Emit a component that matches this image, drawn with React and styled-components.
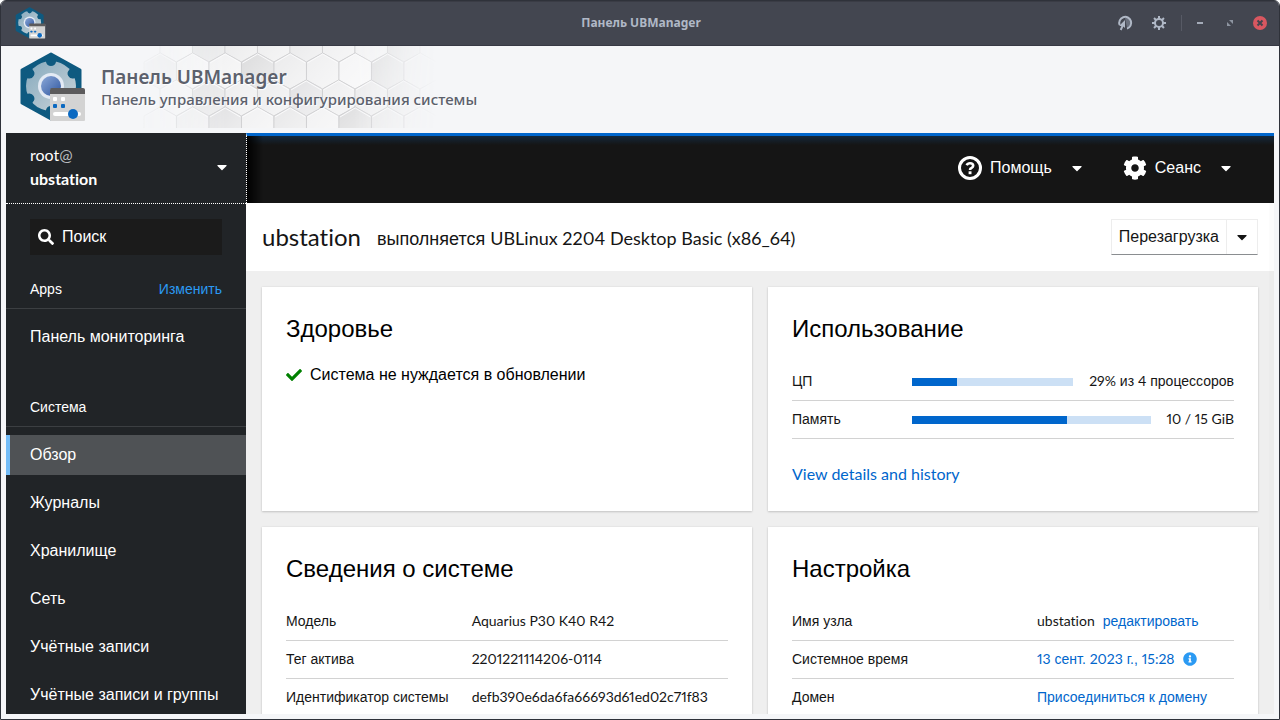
import styled, { createGlobalStyle } from "styled-components";
import {
  FaCaretDown,
  FaCheck,
  FaCog,
  FaInfoCircle,
  FaSearch,
} from "react-icons/fa";

const apps = ["Панель мониторинга"];

const systemPages = [
  "Обзор",
  "Журналы",
  "Хранилище",
  "Сеть",
  "Учётные записи",
  "Учётные записи и группы",
];

// fill of every hexagon in the header, one array per row
const hexRows = [
  { x: 160, y: 44, fills: ["#f2f2f3", "#dedfe0", "#e9e9ea", "#ececed", "#e8e8e9", "#eeeeef", "#f0f0f1", "#dededf", "#f0f0f1"] },
  { x: 144, y: 71, fills: ["#e2e3e4", "#f3f3f4", "#f1f1f2", "#dcdcdd", "#ebebec", "#efeff0", "#f5f5f6", "#dfdfe0", "#eeeeef"] },
  { x: 160, y: 98, fills: ["#f1f1f2", "#e0e0e1", "#ededee", "#ececed", "#e2e2e4", "#eeeeef", "#eaeaeb", "#e6e6e7", "#f2f2f3"] },
  { x: 144, y: 125, fills: ["#f3f3f4", "#ececed", "#e0e0e2", "#f1f1f2", "#e8e8e9", "#f2f2f3", "#dededf", "#e9e9ea", "#efeff0"] },
];

function Logo({ size }) {
  const notches = [0, 60, 120, 180, 240, 300];
  return (
    <svg width={size} height={size} viewBox="0 0 70 70" aria-hidden="true">
      <defs>
        <linearGradient id="gearFill" x1="0" y1="0" x2="1" y2="1">
          <stop offset="0" stopColor="#84a9bd" />
          <stop offset="1" stopColor="#cdd5da" />
        </linearGradient>
        <linearGradient id="coreFill" x1="0" y1="0" x2="1" y2="1">
          <stop offset="0" stopColor="#8ba8d8" />
          <stop offset="1" stopColor="#2f569f" />
        </linearGradient>
      </defs>
      <path
        d="M32 2 L61 18 V51 L32 67 L3 51 V18 Z"
        fill="#0e5a80"
        stroke="#0e5a80"
        strokeWidth="3"
        strokeLinejoin="round"
      />
      <circle cx="32" cy="34" r="25" fill="url(#gearFill)" />
      {notches.map((angle) => (
        <path
          key={angle}
          d="M25 6 L27 10 Q28 14 32 14 Q36 14 37 10 L39 6 Z"
          fill="#0e5a80"
          transform={`rotate(${angle} 32 34)`}
        />
      ))}
      <circle cx="32" cy="34" r="13" fill="#e3eaf4" />
      <circle cx="32" cy="34" r="10" fill="url(#coreFill)" />
      <rect x="31" y="37" width="35" height="32" rx="1" fill="#d3d3d3" />
      <path d="M31 38 Q31 36 33 36 H64 Q66 36 66 38 V42 H31 Z" fill="#5c5b5c" />
      <rect x="34" y="45" width="4" height="4" rx="1" fill="#fff" />
      <rect x="42" y="45" width="4" height="4" rx="1" fill="#fff" />
      <rect x="34" y="52" width="4" height="4" rx="1" fill="#0b69c1" />
      <rect x="42" y="52" width="4" height="4" rx="1" fill="#0b69c1" />
      <rect x="34" y="60" width="28" height="4" rx="2" fill="#fff" />
      <circle cx="54" cy="62" r="5" fill="#0b69c1" />
    </svg>
  );
}

function Honeycomb() {
  return (
    <HoneycombSvg viewBox="130 46 320 82" aria-hidden="true">
      <defs>
        <linearGradient id="fade">
          <stop offset="0" stopColor="#000" />
          <stop offset="0.1" stopColor="#444" />
          <stop offset="0.3" stopColor="#fff" />
          <stop offset="0.7" stopColor="#fff" />
          <stop offset="0.96" stopColor="#000" />
        </linearGradient>
        <linearGradient id="shade" x1="0" y1="0" x2="1" y2="1">
          <stop offset="0" stopColor="#fff" stopOpacity="0" />
          <stop offset="1" stopColor="#fff" stopOpacity="0.5" />
        </linearGradient>
        <mask id="sides" maskUnits="userSpaceOnUse" x="130" y="46" width="320" height="82">
          <rect x="130" y="46" width="320" height="82" fill="url(#fade)" />
        </mask>
      </defs>
      <g mask="url(#sides)">
        {hexRows.map((row) =>
          row.fills.map((fill, i) => {
            const left = row.x + i * 32.5;
            const d = `M${left} ${row.y - 9} l16.2 -9 l16.2 9 v18 l-16.2 9 l-16.2 -9 Z`;
            return (
              <g key={left}>
                <path d={d} fill={fill} stroke="#cfcfd1" strokeWidth="1" />
                <path d={d} fill="url(#shade)" />
                <path
                  d={`M${left + 1} ${row.y - 8} l15.2 -9 l15.2 9`}
                  fill="none"
                  stroke="#fbfbfc"
                />
              </g>
            );
          })
        )}
      </g>
    </HoneycombSvg>
  );
}

function HelpIcon() {
  return (
    <svg width="24" height="24" viewBox="0 0 24 24" fill="none" stroke="#fff" aria-hidden="true">
      <circle cx="12" cy="12" r="10.5" strokeWidth="3" />
      <path d="M8.7 9.3 Q9.6 7.3 12 7.3 Q15.2 7.3 15.2 9.8 Q15.2 11 13.6 11.9 Q12 12.6 12 14" strokeWidth="2.6" />
      <rect x="10.6" y="15.3" width="2.9" height="2.9" fill="#fff" stroke="none" />
    </svg>
  );
}

function PointerIcon() {
  return (
    <svg width="16" height="16" viewBox="0 0 16 16" aria-hidden="true">
      <path d="M8 3 A5 5 0 0 1 10 13 Z" fill="#6a707d" />
      <path d="M2.6 10 A6 6 0 1 1 10 13.6" fill="none" stroke="#b0b8c6" strokeWidth="2" />
      <path d="M8 5 V13 L6.4 11.6 L4.6 15.4 L2.8 14.6 L4.4 11 L2 11 Z" fill="#b0b8c6" />
    </svg>
  );
}

function SettingsIcon() {
  const teeth = [0, 45, 90, 135, 180, 225, 270, 315];
  return (
    <svg width="16" height="16" viewBox="0 0 16 16" aria-hidden="true">
      <circle cx="8" cy="8" r="4" fill="none" stroke="#b0b8c6" strokeWidth="2" />
      {teeth.map((angle) => (
        <rect key={angle} x="7" y="1" width="2" height="3" fill="#b0b8c6" transform={`rotate(${angle} 8 8)`} />
      ))}
    </svg>
  );
}

function NavSection({ title, action, items, active }) {
  return (
    <section>
      <SectionHead>
        <h2>{title}</h2>
        {action && <LinkButton $light>{action}</LinkButton>}
      </SectionHead>
      <NavList>
        {items.map((item) => (
          <li key={item}>
            <NavLink href="#" $active={item === active}>
              {item}
            </NavLink>
          </li>
        ))}
      </NavList>
    </section>
  );
}

function Usage({ label, value, children }) {
  return (
    <UsageRow>
      <UsageLabel>{label}</UsageLabel>
      <Bar role="progressbar" aria-label={label} aria-valuenow={value}>
        <BarFill style={{ width: `${value}%` }} />
      </Bar>
      <UsageText>{children}</UsageText>
    </UsageRow>
  );
}

function App() {
  return (
    <Window>
      <GlobalStyle />
      <TitleBar>
        <Logo size={32} />
        <WindowTitle>Панель UBManager</WindowTitle>
        <WindowButtons>
          <IconButton aria-label="Указатель">
            <PointerIcon />
          </IconButton>
          <IconButton aria-label="Параметры">
            <SettingsIcon />
          </IconButton>
          <Divider />
          <IconButton aria-label="Свернуть">
            <svg width="14" height="14" viewBox="0 0 14 14">
              <path d="M4 7 H10" stroke="#a4abb8" strokeWidth="2" />
            </svg>
          </IconButton>
          <IconButton aria-label="Развернуть">
            <svg width="14" height="14" viewBox="0 0 14 14" fill="#8e95a1">
              <path d="M6 4 H10 V8 Z M4 6 L8 10 H4 Z" />
            </svg>
          </IconButton>
          <IconButton aria-label="Закрыть">
            <svg width="14" height="14" viewBox="0 0 14 14">
              <circle cx="7" cy="7" r="7" fill="#d95760" />
              <path d="M4.5 4.5 L9.5 9.5 M9.5 4.5 L4.5 9.5" stroke="#43454f" strokeWidth="2" />
            </svg>
          </IconButton>
        </WindowButtons>
      </TitleBar>

      <Banner>
        <Honeycomb />
        <Logo size={70} />
        <BannerText>
          <h1>Панель UBManager</h1>
          <p>Панель управления и конфигурирования системы</p>
        </BannerText>
      </Banner>

      <Workspace>
        <Sidebar>
          <HostButton>
            <span>
              root<At>@</At>
              <strong>ubstation</strong>
            </span>
            <FaCaretDown />
          </HostButton>
          <Search>
            <FaSearch />
            <input type="search" placeholder="Поиск" aria-label="Поиск" />
          </Search>
          <NavSection title="Apps" action="Изменить" items={apps} />
          <NavSection title="Система" items={systemPages} active="Обзор" />
        </Sidebar>

        <Main>
          <TopBar>
            <MenuButton>
              <HelpIcon />
              Помощь
              <FaCaretDown />
            </MenuButton>
            <MenuButton>
              <FaCog size={24} />
              Сеанс
              <FaCaretDown />
            </MenuButton>
          </TopBar>

          <PageHead>
            <HostName>ubstation</HostName>
            <HostSystem>
              выполняется <Latin>UBLinux 2204 Desktop Basic (x86_64)</Latin>
            </HostSystem>
            <SplitButton>
              <button>Перезагрузка</button>
              <button aria-label="Другие действия">
                <FaCaretDown size={16} />
              </button>
            </SplitButton>
          </PageHead>

          <Cards>
            <Card>
              <h2>Здоровье</h2>
              <Health>
                <FaCheck />
                Система не нуждается в обновлении
              </Health>
            </Card>

            <Card>
              <h2>Использование</h2>
              <Usage label="ЦП" value={28}>
                <Latin>29%</Latin> из <Latin>4</Latin> процессоров
              </Usage>
              <Usage label="Память" value={65}>
                <Latin>10 / 15 GiB</Latin>
              </Usage>
              <DetailsLink href="#">View details and history</DetailsLink>
            </Card>

            <Card>
              <h2>Сведения о системе</h2>
              <Table $label="42%">
                <tbody>
                  <tr>
                    <th scope="row">Модель</th>
                    <td>Aquarius P30 K40 R42</td>
                  </tr>
                  <tr>
                    <th scope="row">Тег актива</th>
                    <td>2201221114206-0114</td>
                  </tr>
                  <tr>
                    <th scope="row">Идентификатор системы</th>
                    <td>defb390e6da6fa66693d61ed02c71f83</td>
                  </tr>
                </tbody>
              </Table>
            </Card>

            <Card>
              <h2>Настройка</h2>
              <Table $label="245px">
                <tbody>
                  <tr>
                    <th scope="row">Имя узла</th>
                    <td>
                      <Inline>
                        ubstation <LinkButton>редактировать</LinkButton>
                      </Inline>
                    </td>
                  </tr>
                  <tr>
                    <th scope="row">Системное время</th>
                    <td>
                      <Inline>
                        <LinkButton>
                          <Latin>13</Latin> сент. <Latin>2023</Latin> г.,{" "}
                          <Latin>15:28</Latin>
                        </LinkButton>
                        <FaInfoCircle size={14} color="#2b9af3" />
                      </Inline>
                    </td>
                  </tr>
                  <tr>
                    <th scope="row">Домен</th>
                    <td>
                      <LinkButton>Присоединиться к домену</LinkButton>
                    </td>
                  </tr>
                </tbody>
              </Table>
            </Card>
          </Cards>
          <ScrollThumb />
        </Main>
      </Workspace>
    </Window>
  );
}

export default App;

const latin = `Lato, "Liberation Sans", sans-serif`;
const cyrillic = `"Liberation Sans", sans-serif`;

const GlobalStyle = createGlobalStyle`
  * {
    box-sizing: border-box;
  }

  body {
    margin: 0;
    background: #fff;
    color: #151515;
    font-family: ${cyrillic};
    font-size: 16px;
    line-height: 24px;
    font-variant-ligatures: none;
    font-variant-numeric: proportional-nums;
  }

  h1, h2, p, ul {
    margin: 0;
    padding: 0;
    font-weight: 400;
  }

  button, input {
    font: inherit;
    font-variant-ligatures: none;
    font-variant-numeric: proportional-nums;
    color: inherit;
    border: none;
    background: none;
    padding: 0;
  }

  button {
    cursor: pointer;
  }

  svg {
    flex-shrink: 0;
  }
`;

const Window = styled.div`
  display: flex;
  flex-direction: column;
  height: 100vh;
  overflow: hidden;
  background: #f5f6f8;
  border: 1px solid #2f323a;
  border-radius: 6px 6px 0 0;
`;

const TitleBar = styled.header`
  display: grid;
  grid-template-columns: 1fr auto 1fr;
  align-items: center;
  flex-shrink: 0;
  height: 45px;
  padding: 0 12px 2px 14px;
  background: #434650;
  border-top: 1px solid #3a3c45;
  border-bottom: 1px solid #373944;
`;

const WindowTitle = styled.span`
  color: #b0b8c6;
  font-family: "Noto Sans", sans-serif;
  font-size: 12px;
  font-weight: 700;
`;

const WindowButtons = styled.div`
  display: flex;
  align-items: center;
  justify-content: flex-end;
  gap: 16px;
`;

const IconButton = styled.button`
  display: flex;

  &:first-child {
    margin-right: 2px;
  }
`;

const Divider = styled.span`
  width: 1px;
  height: 16px;
  margin: 0 -5px 0 -2px;
  background: #575a65;
`;

const Banner = styled.div`
  position: relative;
  display: flex;
  align-items: center;
  gap: 12px;
  flex-shrink: 0;
  height: 82px;
  padding: 0 18px;

  > svg {
    position: relative;
  }
`;

const HoneycombSvg = styled.svg`
  && {
    position: absolute;
    top: 0;
    left: 129px;
    width: 320px;
    height: 82px;
  }
`;

const BannerText = styled.div`
  position: relative;
  color: #5c616c;
  font-family: "Noto Sans", sans-serif;
  text-shadow: 1px 1px 1px #fff;

  h1 {
    font-size: 19px;
    font-weight: 600;
    line-height: 24px;
  }

  p {
    font-size: 15px;
    font-weight: 500;
    line-height: 20px;
  }
`;

const Workspace = styled.div`
  display: flex;
  flex: 1;
  min-height: 0;
  margin: 5px;
`;

const Sidebar = styled.nav`
  flex: 0 0 240px;
  overflow: hidden;
  background: #212427;
  color: #fff;
`;

const HostButton = styled.button`
  display: flex;
  align-items: center;
  justify-content: space-between;
  width: 100%;
  height: 71px;
  padding: 0 16px 2px 24px;
  border-bottom: 1px dotted #fff;
  font-family: ${latin};
  text-align: left;

  strong {
    display: block;
    font-weight: 700;
  }
`;

const At = styled.span`
  color: #b8bbbe;
`;

const Search = styled.label`
  display: flex;
  align-items: center;
  gap: 8px;
  height: 36px;
  margin: 15px 24px;
  padding: 0 8px;
  background: #1b1b1b;

  input {
    flex: 1;
    min-width: 0;
    outline: none;
  }

  input::placeholder {
    color: #fff;
    opacity: 1;
  }
`;

const SectionHead = styled.div`
  display: flex;
  align-items: center;
  justify-content: space-between;
  height: 39px;
  padding: 0 24px;
  border-bottom: 1px solid #3c3f42;
  font-size: 14px;

  h2 {
    font-family: ${latin};
    font-family: ${cyrillic};
    font-size: 14px;
  }
`;

const NavList = styled.ul`
  display: grid;
  gap: 8px;
  padding: 8px 0 31px;
  list-style: none;
`;

const NavLink = styled.a`
  display: block;
  padding: 8px 20px;
  border-left: 4px solid ${(props) => (props.$active ? "#73bcf7" : "transparent")};
  background: ${(props) => (props.$active ? "#4f5255" : "none")};
  color: #fff;
  text-decoration: none;
  white-space: nowrap;
`;

const LinkButton = styled.button`
  color: ${(props) => (props.$light ? "#2b9af3" : "#0066cc")};
`;

const Latin = styled.span`
  font-family: ${latin};
`;

const Main = styled.main`
  position: relative;
  flex: 1;
  min-width: 0;
  overflow: hidden;
  background: #efefef;
`;

const TopBar = styled.div`
  display: flex;
  align-items: center;
  justify-content: flex-end;
  gap: 38px;
  height: 70px;
  padding: 0 40px 3px 0;
  border-top: 3px solid #0066cc;
  border-left: 1px dotted #fff;
  background: linear-gradient(90deg, #000, transparent 16px),
    linear-gradient(#14283b, #151515 9px);
  color: #fff;
`;

const MenuButton = styled.button`
  display: flex;
  align-items: center;
  gap: 8px;

  svg:last-child {
    margin-left: 9px;
  }
`;

const PageHead = styled.div`
  display: flex;
  align-items: center;
  gap: 16px;
  height: 68px;
  padding: 0 16px;
  background: #fff;
`;

const HostName = styled.h1`
  font-family: ${latin};
  font-size: 24px;
`;

const HostSystem = styled.p`
  flex: 1;
  font-size: 18px;
  padding-top: 2px;
`;

const SplitButton = styled.div`
  display: flex;
  height: 36px;
  border: 1px solid #ededed;
  border-bottom-color: #8a8d90;

  button {
    padding: 0 7px;
  }

  button + button {
    display: flex;
    align-items: center;
    border-left: 1px solid #ededed;
  }
`;

const Cards = styled.div`
  display: grid;
  grid-template-columns: 1fr 1fr;
  gap: 16px;
  padding: 16px;
`;

const Card = styled.section`
  padding: 24px;
  background: #fff;
  box-shadow: 0 1px 2px rgba(3, 3, 3, 0.16), 0 0 2px rgba(3, 3, 3, 0.08);

  h2 {
    margin-bottom: 16px;
    color: #000;
    font-size: 24px;
    line-height: 36px;
  }
`;

const Health = styled.p`
  display: flex;
  align-items: center;
  gap: 8px;
  color: #000;

  svg {
    color: #008000;
  }
`;

const UsageRow = styled.div`
  display: flex;
  align-items: center;
  height: 38px;
  border-bottom: 1px solid #d2d2d2;
  font-size: 14px;
`;

const UsageLabel = styled.span`
  width: 120px;
  padding-bottom: 2px;
`;

const UsageText = styled.span`
  padding-bottom: 2px;
`;

const Bar = styled.div`
  flex: 1;
  height: 8px;
  margin-right: 16px;
  background: #cce0f5;
`;

const BarFill = styled.div`
  height: 100%;
  background: #0066cc;
`;

const DetailsLink = styled.a`
  display: inline-block;
  margin-top: 23px;
  color: #0066cc;
  font-family: ${latin};
  text-decoration: none;
`;

const Table = styled.table`
  width: 100%;
  border-spacing: 0;
  table-layout: fixed;
  font-size: 14px;

  th,
  td {
    height: 38px;
    padding: 0 0 2px;
    border-bottom: 1px solid #d2d2d2;
  }

  th {
    width: ${(props) => props.$label};
    font-weight: 400;
    text-align: left;
    white-space: nowrap;
  }

  td {
    font-family: ${latin};
  }

  button {
    font-family: ${cyrillic};
  }
`;

const Inline = styled.span`
  display: flex;
  align-items: center;
  gap: 8px;
`;

const ScrollThumb = styled.div`
  position: absolute;
  top: 70px;
  right: 0;
  width: 5px;
  height: 70%;
  background: rgba(0, 0, 0, 0.01);
`;
